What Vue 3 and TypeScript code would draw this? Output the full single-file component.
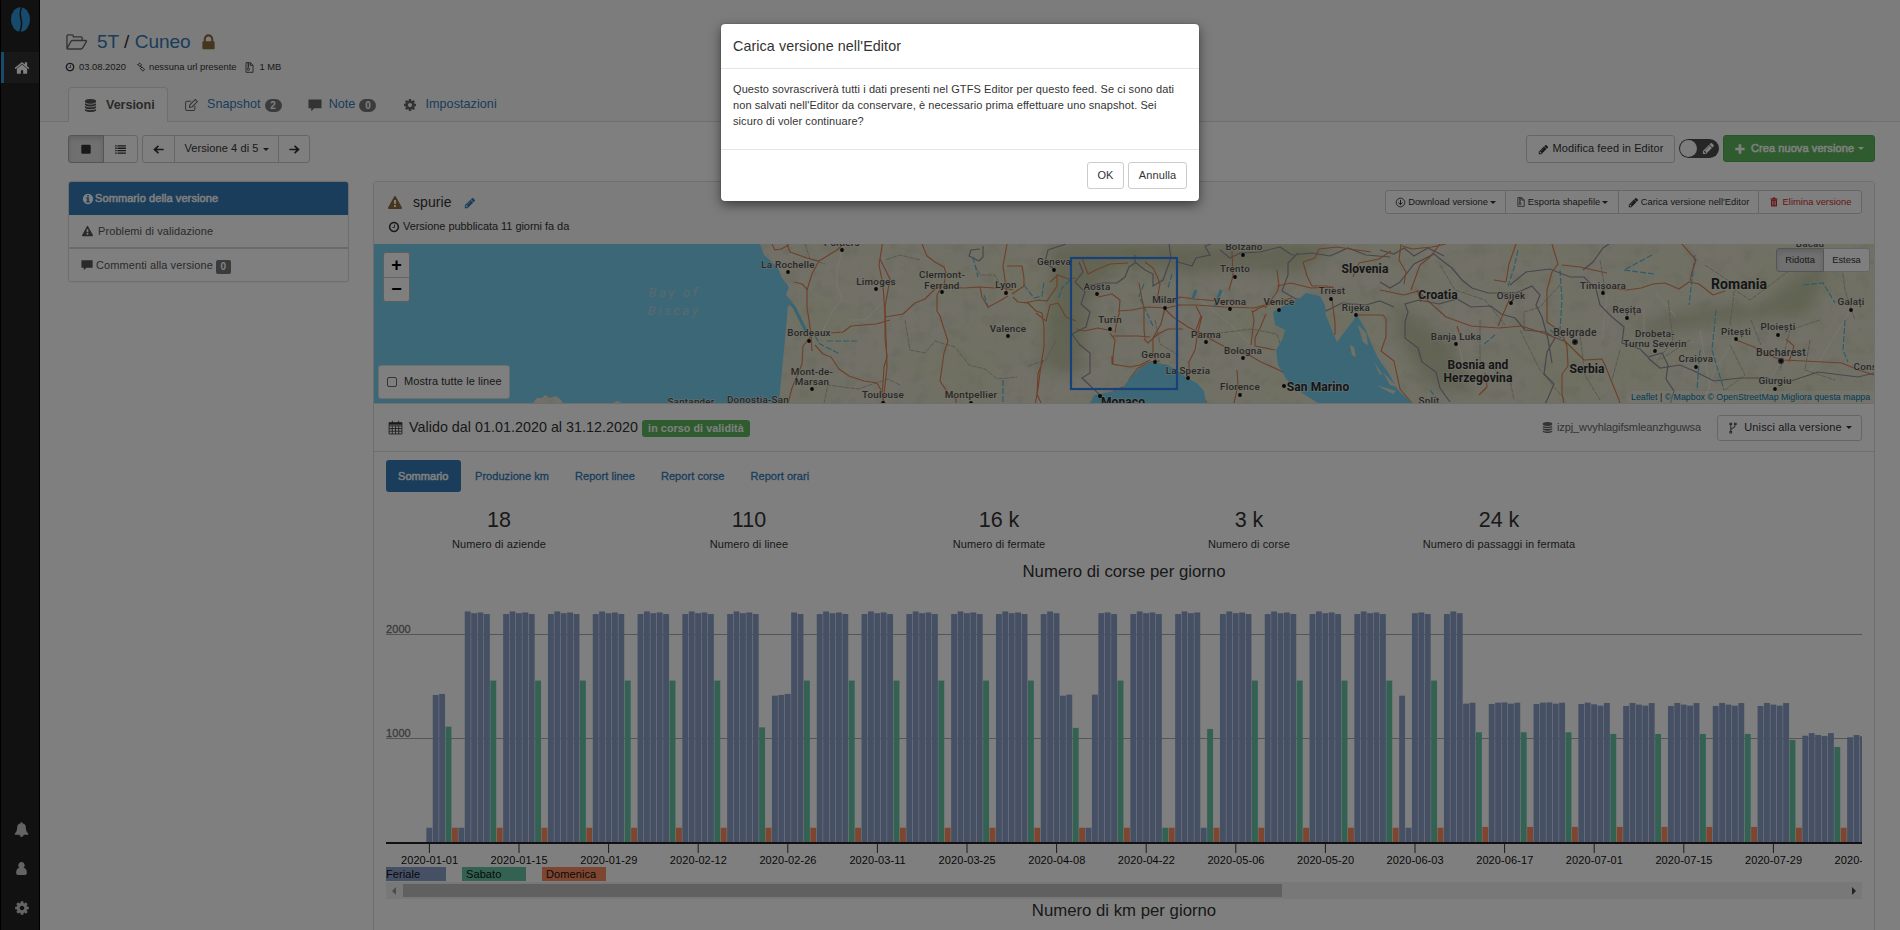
<script setup lang="ts">
import { h } from 'vue'

const icons: Record<string, string> = {
  home: 'M1472 992v480q0 26-19 45t-45 19h-384v-384h-256v384h-384q-26 0-45-19t-19-45v-480q0-1 .5-3t.5-3l575-474 575 474q1 2 1 6zm223-69l-62 74q-8 9-21 11h-3q-13 0-21-7l-692-577-692 577q-12 8-24 7-13-2-21-11l-62-74q-8-10-7-23.5t11-21.5l719-599q32-26 76-26t76 26l244 204v-195q0-14 9-23t23-9h192q14 0 23 9t9 23v408l219 182q10 8 11 21.5t-7 23.5z',
  lock: 'M640 768h512v-192q0-106-75-181t-181-75-181 75-75 181v192zm832 96v576q0 40-28 68t-68 28h-960q-40 0-68-28t-28-68v-576q0-40 28-68t68-28h32v-192q0-184 132-316t316-132 316 132 132 316v192h32q40 0 68 28t28 68z',
  clock: 'M1024 544v448q0 14-9 23t-23 9h-320q-14 0-23-9t-9-23v-64q0-14 9-23t23-9h224v-352q0-14 9-23t23-9h64q14 0 23 9t9 23zm416 352q0-148-73-273t-198-198-273-73-273 73-198 198-73 273 73 273 198 198 273 73 273-73 198-198 73-273zm224 0q0 209-103 385.5t-279.5 279.5-385.5 103-385.5-103-279.5-279.5-103-385.5 103-385.5 279.5-279.5 385.5-103 385.5 103 279.5 279.5 103 385.5z',
  database: 'M896 768q237 0 443-43t325-127v170q0 69-103 128t-280 93.5-385 34.5-385-34.5-280-93.5-103-128v-170q119 84 325 127t443 43zm0 768q237 0 443-43t325-127v170q0 69-103 128t-280 93.5-385 34.5-385-34.5-280-93.5-103-128v-170q119 84 325 127t443 43zm0-384q237 0 443-43t325-127v170q0 69-103 128t-280 93.5-385 34.5-385-34.5-280-93.5-103-128v-170q119 84 325 127t443 43zm0-1152q208 0 385 34.5t280 93.5 103 128v128q0 69-103 128t-280 93.5-385 34.5-385-34.5-280-93.5-103-128v-128q0-69 103-128t280-93.5 385-34.5z',
  warning: 'M1024 1375v-190q0-14-9.5-23.5t-22.5-9.5h-192q-13 0-22.5 9.5t-9.5 23.5v190q0 14 9.5 23.5t22.5 9.5h192q13 0 22.5-9.5t9.5-23.5zm-2-374l18-459q0-12-10-19-13-11-24-11h-220q-11 0-24 11-10 7-10 21l17 457q0 10 10 16.5t24 6.5h185q14 0 23.5-6.5t10.5-16.5zm-14-934l768 1408q35 63-2 126-17 29-46.5 46t-63.5 17h-1536q-34 0-63.5-17t-46.5-46q-37-63-2-126l768-1408q17-31 47-49t65-18 65 18 47 49z',
  pencil: 'M491 1536l91-91-235-235-91 91v107h128v128h107zm523-928q0-22-22-22-10 0-17 7l-542 542q-7 7-7 17 0 22 22 22 10 0 17-7l542-542q7-7 7-17zm-54-192l416 416-832 832h-416v-416zm683 96q0 53-37 90l-166 166-416-416 166-165q36-38 90-38 53 0 91 38l235 234q37 39 37 91z',
  cog: 'M1152 896q0-106-75-181t-181-75-181 75-75 181 75 181 181 75 181-75 75-181zm512-109v222q0 12-8 23t-20 13l-185 28q-19 54-39 91 35 50 107 138 10 12 10 25t-9 23q-27 37-99 108t-94 71q-12 0-26-9l-138-108q-44 23-91 38-16 136-29 186-7 28-36 28h-222q-14 0-24.5-8.5t-11.5-21.5l-28-184q-49-16-90-37l-141 107q-10 9-25 9-14 0-25-11-126-114-165-168-7-10-7-23 0-12 8-23 15-21 51-66.5t54-70.5q-27-50-41-99l-183-27q-13-2-21-12.5t-8-23.5v-222q0-12 8-23t19-13l186-28q14-46 39-92-40-57-107-138-10-12-10-24 0-10 9-23 26-36 98.5-107.5t94.5-71.5q13 0 26 10l138 107q44-23 91-38 16-136 29-186 7-28 36-28h222q14 0 24.5 8.5t11.5 21.5l28 184q49 16 90 37l142-107q9-9 24-9 13 0 25 10 129 119 165 170 7 8 7 22 0 12-8 23-15 21-51 66.5t-54 70.5q26 50 41 98l183 28q13 2 21 12.5t8 23.5z',
  info: 'M1152 1376v-160q0-14-9-23t-23-9h-96v-512q0-14-9-23t-23-9h-320q-14 0-23 9t-9 23v160q0 14 9 23t23 9h96v320h-96q-14 0-23 9t-9 23v160q0 14 9 23t23 9h448q14 0 23-9t9-23zm-128-896v-160q0-14-9-23t-23-9h-192q-14 0-23 9t-9 23v160q0 14 9 23t23 9h192q14 0 23-9t9-23zm640 416q0 209-103 385.5t-279.5 279.5-385.5 103-385.5-103-279.5-279.5-103-385.5 103-385.5 279.5-279.5 385.5-103 385.5 103 279.5 279.5 103 385.5z',
  bell: 'M912 1696q0-16-16-16-59 0-101.5-42.5t-42.5-101.5q0-16-16-16t-16 16q0 73 51.5 124.5t124.5 51.5q16 0 16-16zm816-288q0 52-38 90t-90 38h-448q0 106-75 181t-181 75-181-75-75-181h-448q-52 0-90-38t-38-90q50-42 91-88t85-119.5 74.5-158.5 50-206 19.5-260q0-152 117-282.5t307-158.5q-8-19-8-39 0-40 28-68t68-28 68 28 28 68q0 20-8 39 190 28 307 158.5t117 282.5q0 139 19.5 260t50 206 74.5 158.5 85 119.5 91 88z',
  user: 'M896 128a384 384 0 0 1 250 675q330 40 390 500v120q0 190-190 241H446q-190-51-190-241v-120q60-460 390-500A384 384 0 0 1 896 128z',
  folder: 'M160 1400V420q0-100 100-100h320q100 0 100 100v60h620q100 0 100 100v190M160 1440L480 850q40-80 130-80h1060q120 0 60 110l-290 500q-50 90-150 90H230q-90 0-70-70z',
  link: 'M300 520l260-260q90-90 180 0l180 180q90 90 0 180l-130 130q-90 90-180 0l-300-300zM850 1080l130-130q90-90 180 0l300 300q90 90 0 180l-130 130q-90 90-180 0l-300-300q-90-90 0-180zM700 700l370 370',
  file: 'M330 110h720l420 420v1150H330zM1040 110v440h430M640 110v150h150v150H640v150h150v150H640v150M560 1240l80-300h160l90 300q0 120-165 120t-165-120z',
  edit: 'M1400 1000v380q0 220-220 220H420q-220 0-220-220V640q0-220 220-220h500M700 1200l60-330 680-680 270 270-680 680z',
  comment: 'M60 200h1670v1100H800L420 1680v-380H60z',
  square: 'M384 256h1024q192 0 192 192v960q0 192-192 192H384q-192 0-192-192V448q0-192 192-192z',
  list: 'M20 200h250v210H20zM390 200h1390v210H390zM20 590h250v210H20zM390 590h1390v210H390zM20 980h250v210H20zM390 980h1390v210H390zM20 1370h250v210H20zM390 1370h1390v210H390z',
  left: 'M40 896l760-700 180 180-360 380h1110v280H620l360 380-180 180z',
  right: 'M1752 896l-760-700-180 180 360 380H62v280h1110l-360 380 180 180z',
  plus: 'M690 200h400v500h500v400h-500v500H690v-500H190V700h500z',
  download: 'M896 200a696 696 0 1 0 1 0zM896 480v750M560 900l336 350 336-350',
  trash: 'M256 256h350l80-150h420l80 150h350v170H256zM350 500h1090v1060q0 130-120 130H470q-120 0-120-130zM590 680v820h100V680zM850 680v820h100V680zM1110 680v820h100V680z',
  branch: 'M560 300v1200M1240 350q0 400-340 560-340 120-340 380M430 180h260v200H430zM430 1430h260v200H430zM1110 180h260v200h-260z',
  calendar: 'M130 320h1530v1350H130zM130 700h1530M130 1020h1530M130 1340h1530M510 700v970M900 700v970M1280 700v970M520 90v400M1270 90v400',
}
const outlined = ['folder', 'link', 'file', 'edit', 'download', 'branch', 'calendar']
const strokes: Record<string, number> = { folder: 110, link: 170, branch: 150, download: 160, calendar: 100 }

const Icon = (p: { n: string; s?: number }) =>
  h(
    'svg',
    {
      class: 'icon',
      viewBox: '0 0 1792 1792',
      width: p.s ?? 12,
      height: p.s ?? 12,
    },
    [
      h('path', {
        d: icons[p.n],
        'fill-rule': p.n === 'trash' ? 'evenodd' : 'nonzero',
        fill: outlined.includes(p.n) ? 'none' : 'currentColor',
        stroke: outlined.includes(p.n) ? 'currentColor' : 'none',
        'stroke-width': strokes[p.n] ?? 130,
      }),
      p.n === 'calendar' ? h('path', { d: 'M130 320h1530v240H130z', fill: 'currentColor' }) : null,
    ],
  )
Icon.props = ['n', 's']

const stats = [
  ['18', 'Numero di aziende'],
  ['110', 'Numero di linee'],
  ['16 k', 'Numero di fermate'],
  ['3 k', 'Numero di corse'],
  ['24 k', 'Numero di passaggi in fermata'],
]

/* Daily trips, one array per week starting on Monday; the first bar is Wednesday 2020-01-01. */
const full = [2195, 2220, 2203, 2210, 2195, 1555, 140]
const june = [1330, 1343, 1345, 1333, 1342, 1058, 148]
const july = [1311, 1340, 1324, 1314, 1339, 1042, 148]
const weeks: number[][] = [
  [0, 0, 140, 1417, 1427, 1112, 140],
  [140, 2220, 2203, 2210, 2195, 1555, 140],
  full, full, full, full, full,
  [2195, 2220, 2203, 2210, 2195, 1105, 140],
  [1410, 1417, 1427, 2210, 2195, 1555, 140],
  full, full, full, full, full,
  [2195, 2220, 2203, 1410, 1420, 1100, 140],
  [140, 1420, 2203, 2210, 2195, 1555, 140],
  [2195, 2220, 2203, 2210, 2195, 140, 140],
  [2195, 2220, 2203, 2210, 140, 1090, 140],
  full, full, full, full,
  [1410, 140, 2203, 2210, 2195, 1555, 140],
  [2195, 2220, 2203, 1333, 1342, 1058, 148],
  june, june,
  [1330, 1343, 1327, 1314, 1340, 1042, 148],
  july, july, july,
  [1311, 1340, 1324, 1314, 1339, 984, 140],
  [1025, 1050, 1032, 1023, 1050, 917, 140],
  [1010, 1032, 1020],
]
const bars = weeks.flatMap((w, wi) =>
  w.map((v, di) => ({
    x: 40.35 + (wi * 7 + di - 2) * 6.4,
    hgt: v * 0.104,
    color: di === 5 ? '#66c2a5' : di === 6 ? '#fc8d62' : '#8da0cb',
  })),
).filter((b) => b.hgt > 0)
const dates = [
  '2020-01-01', '2020-01-15', '2020-01-29', '2020-02-12', '2020-02-26', '2020-03-11', '2020-03-25', '2020-04-08',
  '2020-04-22', '2020-05-06', '2020-05-20', '2020-06-03', '2020-06-17', '2020-07-01', '2020-07-15', '2020-07-29', '2020-08-12',
]

const roads = [
  'M772 244l3 6 6-1 8-4M787 244l3 8 17 6 12 3 18-11 7-6M819 261l-7 13-5 16 0 18 2 12 2 15 1 16M794 282l8 2 6 6M811 336l-8 10-1 18-10 24-4 15M815 345l8 9 8 3 8 12 10 7 15 5 13 2 8 14M831 333l12-1 8-6 25-2 14-4M885 403l-3-6 2-30 3-10-2-20 0-22-2-30-4-20 5-31',
  'M880 259l10 20-5 28 2 60-4 36M885 317l18-3 12-11 10-4 10-10 7-4M942 286l-5 9 0 16 3 5 4 13 4 12-4 12-4 28 8 12 8 6 0 14M922 244l5 12 8 6 9 5 2 6-2 12M944 287l20 1 15-1 16 1 10 0 8 2M1007 244l-4 22 4 28M1007 266l15 0 2 12 0 8-12 8M1013 297l5 5 10 1 8 8 6 2 2 14 0 20-3 18-3 24-3 16 0 0M1024 303l15-3 8 1 10-15 0-12M1036 313l10 8 4-16 8-2 8 14 10 4M1043 360l-5 14-1 20 4 9M980 287l2 10 6 10 10-5 10-6M1050 282l8-7 10 4 8-1',
  'M1082 258l6 16 10-5 12-5 18-1M1098 297l14-3 8 6-1 14-2 7-2 12M1076 329l8 2 14-3 15 3M1110 333l5 7-2 16 0 8 3 1M1118 311l14-1 15-3 20 1 8-2 6-1M1139 283l2 11 3 15 0 20 1 11 3 3 10-9 10-5 15 0M1165 308l-4 16-8 14 0 15 3 8M1165 309l8 8 15 10 10 5 4-16M1113 336l25 0 12 1M1112 356l0 8 18 3 10-2 10-5M1090 403l20-10 8-4 8-3 4-8 8-10 12-6 10-1M1145 262l8 6 4 8 3 8-3 16M1170 303l10-6 14 2 24 2 14-1 8 1M1176 305l20 0 28 2 30 1 18-5 20-5M1196 306l5 10-5 14',
  'M1198 331l16 10 15 8 20 6 12 7 18 8 16 10 20 12M1198 332l-3 18 -6 12 0 16 4 10 13 13 2 12M1229 290l4-14-1-25M1252 310l2 10-3 25M1253 312l6-4 12-4M1266 314l-6 14-5 10 0 8 20 4M1237 370l1 15-4 18M1277 270l2 16 -2 6-12 16M1277 286l14-3 20 5 22-1M1303 262l4 14 5 10 14 0 8 2M1303 262l12-4 4-9 18-2 20 3 14 2M1353 277l6-14 20-4 12-8M1332 299l3 24 0 12M1358 315l25 0 3 4 0 18-5 14 13 10 6 28 12 14',
  'M1380 290l24 5 14-4 8 8 20 18 25 9 28 2 22-2 25 8 20 8 10 10 8 8 18-1 3 6 6 15 8 20 2 10M1401 244l-2 16 7 12-2 12M1402 246l10 3 20-2 14-3M1417 290l4 12M1440 244l-10 13-10 8-9 25M1516 244l-7 20-3 18-12-2M1552 244l6 20-6 8-5 18 0 32 14 10 6 14 1 20-6 8 0 20 4 18M1562 265l18 2 18 4 9 2M1607 288l20 2 14-2 12-4 12-1 14 6 10-7 10 2 14 11 12-4M1510 298l-12 28M1457 326l4 12M1485 373l2 14-8 8M1682 244l14 16-4 12-2 9M1736 340l18 7 14 8 14 5 22 1 38 2 14 6 18 6M1786 339l8 7-5 16',
]
const borders = [
  'M980 249l-9 1-2 6 10 5 4-4 0-11M1055 270l-10-8 3-12 18-6M1079 262l4 10 -8 10 10 10-4 12 9 8-4 15-14 7 8 11 10 8 0 20-8 5 18 17 20 2 11-3-3 14M1086 286l17-3 14 0 8-6 4-10 6-4 0-8M1135 262l10 8 8 4 0 12 10-6 8-22-2-14M1178 262l14 4 4-8 14-3-5-9 6-2M1298 253l-10 10 0 12-6 16 14 8 20 0 10 12 16-8 24 2 14-4 14 6M1220 250l10 8 10-5 20-1 20-5 12 8 20-2 18 3 18-8 18 7 24 2',
  'M1380 282l10 6 10-6 14-18 20-10 10 8 8 6 10 12 10 8 16 5 28 0 16-7 8 9-4 10 6 12 6 22 4 24M1510 285l16-13 24-3 20 8 14 0 12 12 4 16 12 12 12 10-2 16 18 6 8 8 14-4 6 12-2 14 8 12-4 14M1405 322l3-10-3-8 14-4 20 4 18-5 14 8 20-1 10 8 14 4 10 12 20 2 10 6-8 14-3 22 10 10-6 14-4 8M1405 322l0 16 13 10 4 14 14 10 4 16 10 14M1380 250l14 4 10-6 10 8 14-8 16 8M1583 270l10-8 10-14 6-4M1648 358l12 10 20-3 14 6 20 10 26-3 26 0 22 4 30-10 40 5 16-4',
]
const cities: [string, number, number, number, number][] = [
  ['La Rochelle', 788, 268, 788, 272], ['Limoges', 876, 285, 876, 289], ['Bordeaux', 809, 336, 809, 341], ['Toulouse', 883, 398, 883, 403],
  ['Lyon', 1006, 288, 1006, 293], ['Geneva', 1054, 265, 1054, 270], ['Valence', 1008, 332, 1008, 336], ['Montpellier', 971, 398, 971, 403],
  ['Aosta', 1097, 290, 1097, 294], ['Milan', 1165, 303, 1165, 308], ['Turin', 1110, 323, 1110, 329], ['Genoa', 1156, 358, 1155, 362],
  ['La Spezia', 1188, 374, 1188, 378], ['Parma', 1206, 338, 1206, 342], ['Bologna', 1243, 354, 1243, 358], ['Florence', 1240, 390, 1240, 395],
  ['Verona', 1230, 305, 1230, 309], ['Venice', 1279, 305, 1279, 310], ['Trento', 1235, 272, 1235, 277], ['Bolzano', 1244, 250, 1243, 255],
  ['Triest', 1332, 294, 1331, 299], ['Rijeka', 1356, 311, 1356, 315], ['Osijek', 1511, 299, 1511, 303], ['Banja Luka', 1456, 340, 1456, 344],
  ['Timișoara', 1603, 289, 1603, 293], ['Reșița', 1627, 313, 1627, 318], ['Craiova', 1696, 362, 1696, 367], ['Pitești', 1736, 335, 1736, 339],
  ['Ploiești', 1778, 330, 1778, 335], ['Giurgiu', 1775, 384, 1775, 389], ['Galați', 1851, 305, 1851, 310], ['Poitiers', 842, 246, 842, 250],
]
</script>

<template>
  <div class="page">
    <aside class="sidebar">
      <svg class="logo" width="19" height="25" viewBox="0 0 19 25">
        <ellipse cx="9.5" cy="12.5" rx="9.5" ry="12.2" fill="#2f96d8" />
        <path d="M10.5 0Q8.3 6 10 12T8.7 25" fill="none" stroke="#222" stroke-width="1.5" />
      </svg>
      <div class="side-item on"><Icon n="home" :s="16" /></div>
      <div class="side-bottom">
        <Icon n="bell" :s="15" />
        <Icon n="user" :s="15" />
        <Icon n="cog" :s="16" />
      </div>
    </aside>

    <main>
      <header>
        <h3 class="title">
          <Icon n="folder" :s="22" /><span><a>5T</a> / <a>Cuneo</a></span><Icon n="lock" :s="19" />
        </h3>
        <div class="meta">
          <Icon n="clock" :s="10" /><span class="m1">03.08.2020</span>
          <Icon n="link" :s="10" /><span class="m2">nessuna url presente</span>
          <Icon n="file" :s="11" /><span>1 MB</span>
        </div>
        <nav class="tabs">
          <div class="tab active"><Icon n="database" :s="13" /><b>Versioni</b></div>
          <div class="tab t2"><Icon n="edit" :s="14" /><a>Snapshot</a><i>2</i></div>
          <div class="tab t3"><Icon n="comment" :s="14" /><a>Note</a><i>0</i></div>
          <div class="tab t4"><Icon n="cog" :s="14" /><a>Impostazioni</a></div>
        </nav>
      </header>

      <div class="toolbar">
        <div class="group g1">
          <button class="pressed"><Icon n="square" :s="12" /></button>
          <button><Icon n="list" :s="11" /></button>
        </div>
        <div class="group g2">
          <button><Icon n="left" :s="11" /></button>
          <button>Versione 4 di 5<u /></button>
          <button><Icon n="right" :s="11" /></button>
        </div>
        <span class="grow" />
        <button class="btn modify"><Icon n="pencil" :s="11" />Modifica feed in Editor</button>
        <div class="toggle"><span /><Icon n="pencil" :s="13" /></div>
        <button class="btn create"><Icon n="plus" :s="12" />Crea nuova versione<u /></button>
      </div>

      <div class="columns">
        <section class="list">
          <div class="row sel"><Icon n="info" :s="12" />Sommario della versione</div>
          <div class="row r2"><Icon n="warning" :s="11" />Problemi di validazione</div>
          <div class="row r3"><Icon n="comment" :s="12" />Commenti alla versione<i>0</i></div>
        </section>

        <section class="panel">
          <div class="panel-head">
            <div>
              <h4><Icon n="warning" :s="14" /><span>spurie</span><Icon n="pencil" :s="12" /></h4>
              <p><Icon n="clock" :s="12" />Versione pubblicata 11 giorni fa da</p>
            </div>
            <div class="group small">
              <button class="b1"><Icon n="download" :s="11" />Download versione<u /></button>
              <button class="b2"><Icon n="file" :s="10" />Esporta shapefile<u /></button>
              <button class="b3"><Icon n="pencil" :s="11" />Carica versione nell'Editor</button>
              <button class="b4"><Icon n="trash" :s="10" />Elimina versione</button>
            </div>
          </div>

          <div class="map">
            <svg width="1500" height="159" viewBox="374 244 1500 159">
              <defs>
                <filter id="relief" x="0" y="0" width="100%" height="100%">
                  <feTurbulence type="fractalNoise" baseFrequency=".012 .02" numOctaves="5" seed="7" />
                  <feColorMatrix values="0 0 0 0 .72  0 0 0 0 .76  0 0 0 0 .52  0 3.2 0 0 -1.25" />
                </filter>
                <filter id="shade" x="0" y="0" width="100%" height="100%">
                  <feTurbulence type="fractalNoise" baseFrequency=".07" numOctaves="3" seed="3" />
                  <feColorMatrix values="0 0 0 0 .5  0 0 0 0 .5  0 0 0 0 .38  0 4 0 0 -2.1" />
                </filter>
                <filter id="soft"><feGaussianBlur stdDeviation="7" /></filter>
                <clipPath id="land">
                  <path d="M760 244l4 11 8 7 6 6 4 10 7 9-3 8 7 8-5 3-3 34-3 30-3 33h311l4-8 16-3 12-3 8-11 10-10 10-6 8 1 10 2 10 6 10 7 10 6 6 7 2 12h112l-13-8-15-10-12-20-2-15 6-10 3-10-10-5-2-13 12-7 15-7 6-5 14 3 5 9 1 10 6 15 5 12 5-7 10-13 5-7 9 15 6 15 6 13 10 14 10 18 14 13h462V244z" />
                  <path d="M533 403l4-5 5 0 3-3 5 3 6-2 4 3 3 4zM613 403l4-2 5 2z" />
                  <path d="M1358 325l8 8 2 12-5-3zM1350 345l4 2 2 10-4-2zM1374 362l8 12-2 1zM1383 372l14 15-7-2zM1376 385l20 6-3 3z" />
                </clipPath>
              </defs>
              <rect x="374" y="244" width="1500" height="159" fill="#76ceee" />
              <path d="M420.500 244v159" stroke="#7dd0ef" />
              <g clip-path="url(#land)">
                <rect x="374" y="244" width="1500" height="159" fill="#e4e1cf" />
                <rect x="374" y="244" width="1500" height="159" filter="url(#relief)" opacity=".6" />
                <g opacity=".3" filter="url(#soft)">
                  <path d="M1050 244h290l-40 30-60-5-50 5-70-10-30 30-10 80-40-5 10-60z" fill="#85925c" />
                  <path d="M1630 325l80-20 50 0 50-40 20 0-20 50-60 5-100 15z" fill="#85925c" />
                  <path d="M1390 300l60 40 20 50-40 0-30-50z" fill="#85925c" />
                </g>
                <rect x="374" y="244" width="1500" height="159" filter="url(#shade)" opacity=".22" />
                <g fill="none" stroke="#f0eee4" stroke-width="1">
                  <path d="M842 250l-5 20 0 15 5 15-10 12-10 20M885 300l-20 20-15 0M1200 300l30 24 20 20M1455 330l10 40M1607 294l-5 45M1644 310l0 40M1700 330l10 60M1780 362l-20 35M1676 317l-20-24M1735 339l-20 30-10 30M1850 310l-30 50-20 20" />
                </g>
                <g fill="none" stroke="#b1b1a1" stroke-width="1" stroke-dasharray="5 1">
                  <path d="M805 244l5 15 15 5M900 385l-12-6-30 10-30-4-4 18M905 320l5 30 15 3 10-12 20 6 14 18 16 4 12 10 20-2M920 260l-20-5-15 5M975 265l5 10 15 0 5 10M1028 366l18-6 10-20M1155 320l5 24 20 12M1212 334l40-5 25 5 4 12M1440 265l15 25 30 10 20 25M1560 285l-20 22-16 5 0 20M1580 335l5 40 15 25M1620 350l-8 30M1668 300l5 40-15 20M1705 265l30 20-5 40M1730 345l15 30-20 15M1600 260l5 30M1790 270l-40 30-15-10M1820 320l-30 10-10 40" />
                  <path d="M1480 320l0 40 30 20 4 20M1520 330l20 40 25 30M1690 340l-30 20M1751 320l10 25M1810 340l-5 30 30 10M1840 250l5 40 10 30" />
                </g>
                <g fill="none" stroke="#5bb9dd" stroke-width="1.2" stroke-dasharray="6 2">
                  <path d="M973 257l5 20M984 295l5 15M1024 285l10 13 8-2 2-14M1070 280l-8 8-4 12M1003 380l0 23M815 336l5 8 20 10M827 341h32M1144 284l-5 12 14 30M1172 274l-4 14M1518 250l-4 18-6 18M1560 270l2 30-2 30M1652 255l-28 15 30 4M1716 310l-4 40 12 40M1845 320l-2 30 5 12M1803 285l20-2 12 20M1550 330l14 10M1700 350l-3 40M1430 390l8 10M1495 335l-12 10M1695 255l-6 50" />
                </g>
                <path d="M788 301l6 6 7 14 5 10M1221 290l-5 14-1 2M1196 290l-3 8" fill="none" stroke="#6cc8ea" stroke-width="3" />
                <path v-for="(d, i) in borders" :key="'b' + i" :d="d" fill="none" stroke="#908d9a" stroke-width="1.200" />
                <path v-for="(d, i) in roads" :key="'r' + i" :d="d" fill="none" stroke="#dd8055" stroke-width="1.150" stroke-linejoin="round" />
              </g>
              <g class="places">
                <g v-for="c in cities" :key="c[0]">
                  <text :x="c[1]" :y="c[2]">{{ c[0] }}</text>
                  <circle :cx="c[3]" :cy="c[4]" r="1.900" />
                </g>
                <text x="942" y="278">Clermont-</text><text x="942" y="289">Ferrand</text><circle cx="942" cy="292" r="1.900" />
                <text x="812" y="375">Mont-de-</text><text x="812" y="385">Marsan</text><circle cx="812" cy="389" r="1.900" />
                <text x="1655" y="337">Drobeta-</text><text x="1655" y="347">Turnu Severin</text><circle cx="1655" cy="351" r="1.900" />
                <text x="691" y="405">Santander</text><text x="758" y="403">Donostia-San</text>
                <text x="1429" y="404">Split</text><text x="1867" y="370">Const</text><text x="1810" y="247">Bacău</text>
                <text x="1575" y="336" class="cap">Belgrade</text><text x="1781" y="356" class="cap">Bucharest</text>
                <g class="ring"><circle cx="1575" cy="342" r="2.400" /><circle cx="1781" cy="361" r="2.400" /></g>
                <g class="country">
                  <text x="1365" y="273">Slovenia</text><text x="1438" y="299">Croatia</text>
                  <text x="1478" y="369">Bosnia and</text><text x="1478" y="382">Herzegovina</text>
                  <text x="1587" y="373">Serbia</text><text x="1739" y="289" class="big">Romania</text>
                  <text x="1318" y="391">San Marino</text><text x="1123" y="406">Monaco</text>
                </g>
                <circle cx="1284" cy="386" r="2" /><circle cx="1100" cy="396" r="2" />
              </g>
              <g class="sea"><text x="674" y="297">Bay of</text><text x="674" y="315">Biscay</text></g>
              <rect x="1071" y="258" width="106" height="131" fill="none" stroke="#3182f5" stroke-width="2.200" />
            </svg>
            <div class="zoom"><span>+</span><span>−</span></div>
            <label class="lines"><span />Mostra tutte le linee</label>
            <div class="group size"><button class="pressed">Ridotta</button><button>Estesa</button></div>
            <div class="credits"><a>Leaflet</a> | <a>© Mapbox</a> <a>© OpenStreetMap</a> <a>Migliora questa mappa</a></div>
          </div>

          <div class="validity">
            <Icon n="calendar" :s="15" />
            <h4>Valido dal 01.01.2020 al 31.12.2020</h4>
            <b>in corso di validità</b>
            <span class="grow" />
            <span class="feed"><Icon n="database" :s="11" />izpj_wvyhlagifsmleanzhguwsa</span>
            <button class="btn merge"><Icon n="branch" :s="12" />Unisci alla versione<u /></button>
          </div>

          <nav class="pills">
            <a class="on">Sommario</a><a>Produzione km</a><a>Report linee</a><a>Report corse</a><a>Report orari</a>
          </nav>

          <div class="stats">
            <div v-for="s in stats" :key="s[1]"><strong>{{ s[0] }}</strong><span>{{ s[1] }}</span></div>
          </div>

          <h3 class="chart-title">Numero di corse per giorno</h3>
          <svg class="chart" width="1476" height="302" viewBox="0 580 1476 302">
            <g stroke="#aaa"><path d="M0 634.500H1476M0 738.500H1476" /></g>
            <text x="0" y="633" class="tick">2000</text><text x="0" y="737" class="tick">1000</text>
            <rect v-for="b in bars" :key="b.x" :x="b.x" :y="842.3 - b.hgt" width="5.900" :height="b.hgt" :fill="b.color" />
            <path d="M0 843H1476" stroke="#222" stroke-width="2" />
            <g v-for="(d, i) in dates" :key="d">
              <path :d="`M${43.4 + i * 89.6} 844v9`" stroke="#333" />
              <text :x="43.6 + i * 89.6" y="864" text-anchor="middle">{{ d }}</text>
            </g>
            <rect x="0" y="867" width="60" height="14" fill="#8da0cb" />
            <rect x="76" y="867" width="64" height="14" fill="#66c2a5" />
            <rect x="156" y="867" width="64" height="14" fill="#fc8d62" />
            <text x="0" y="877.500">Feriale</text><text x="80" y="877.500">Sabato</text><text x="160" y="877.500">Domenica</text>
          </svg>
          <div class="scrollbar"><em class="prev" /><span /><em class="next" /></div>
          <h3 class="chart-title km">Numero di km per giorno</h3>
        </section>
      </div>
    </main>

    <div class="backdrop">
      <div class="modal">
        <h4>Carica versione nell'Editor</h4>
        <p>Questo sovrascriverà tutti i dati presenti nel GTFS Editor per questo feed. Se ci sono dati<br />non salvati nell'Editor da conservare, è necessario prima effettuare uno snapshot. Sei<br />sicuro di voler continuare?</p>
        <footer><button class="btn ok">OK</button><button class="btn no">Annulla</button></footer>
      </div>
    </div>
  </div>
</template>

<style>
html, body { margin: 0; overflow: hidden; }
</style>

<style scoped>
* { box-sizing: border-box; }
.page { position: relative; display: flex; width: 1900px; height: 930px; overflow: hidden; background: #fff; color: #333; font: 11px/15.7px "Liberation Sans", Arial, sans-serif; letter-spacing: .09px; }
a { color: #337ab7; }
h3, h4, p { margin: 0; font-weight: 400; }
button { font: inherit; letter-spacing: inherit; color: inherit; background: #fff; border: 1px solid #ccc; padding: 0; display: flex; align-items: center; justify-content: center; white-space: nowrap; }
.icon { flex: none; display: block; overflow: visible; }
.grow { flex: 1; }
u { width: 0; height: 0; border: 3px solid transparent; border-top: 3px solid currentColor; border-bottom: 0; margin-left: 4px; }
i { font-style: normal; font-weight: 700; color: #fff; background: #777; text-align: center; }

.sidebar { width: 40px; flex: none; display: flex; flex-direction: column; background: #222; border-left: 1px solid #000; border-right: 1px solid #000; color: #c8c8c8; }
.logo { margin: 7px 0 20px 10px; }
.side-item { height: 31px; display: flex; align-items: center; padding-left: 10px; background: #303030; border-left: 3px solid #2f96d8; color: #fff; }
.side-bottom { margin-top: auto; height: 108px; padding-left: 13px; display: flex; flex-direction: column; gap: 24px; }

main { flex: 1; min-width: 0; }
header { height: 122px; padding: 31px 26px 0 26px; background: #f8f8f8; border-bottom: 1px solid #e2e2e2; display: flex; flex-direction: column; }
.title { display: flex; align-items: center; height: 22px; font-size: 19px; letter-spacing: 0; }
.title .icon:first-child { color: #666; margin: 0 10px 0 -1px; }
.title .icon:last-child { color: #8a6d3b; margin-left: 8px; }
.meta { display: flex; align-items: center; height: 16px; margin-top: 6px; font-size: 9.400px; letter-spacing: 0; }
.meta .icon:first-child { margin-left: -1px; }
.meta span { margin-left: 4px; }
.meta .m1 { margin-right: 10px; }
.meta .m2 { margin: 0 8px 0 3px; }
.tabs { display: flex; height: 35px; margin: 12px 0 -1px 2px; border-bottom: 1px solid #ddd; font-size: 12.600px; letter-spacing: .05px; }
.tab { display: flex; align-items: center; color: #666; padding-top: 1px; }
.tab.active { width: 100px; height: 35px; padding-left: 15px; background: #fff; border: 1px solid #ddd; border-bottom: 0; border-radius: 4px 4px 0 0; color: #555; }
.active b { margin-left: 9px; letter-spacing: -.05px; }
.t2 { margin-left: 16px; } .t3 { margin-left: 26px; } .t4 { margin-left: 27px; }
.tab a { margin-left: 9px; }
.t3 a { margin-left: 7px; }
.t4 a { margin-left: 8px; }
.tab i { margin: 2px 0 0 4px; width: 17px; height: 13px; border-radius: 7px; font-size: 10px; line-height: 13px; }

.toolbar { display: flex; height: 28px; margin: 13px 25px 0 28px; }
.group { display: flex; }
.group button + button { margin-left: -1px; }
.group button:first-child { border-radius: 3px 0 0 3px; }
.group button:last-child { border-radius: 0 3px 3px 0; }
.pressed { background: #e0e0e0; border-color: #aaa; box-shadow: inset 0 3px 5px rgba(0,0,0,.125); position: relative; z-index: 1; }
.g1 button { width: 35px; height: 28px; }
.g1 .pressed { width: 36px; }
.g2 { margin-left: 4px; }
.g2 button { width: 32px; height: 28px; }
.g2 button:first-child { width: 33px; }
.g2 button:nth-child(2) { width: 105px; }
.btn { border-radius: 3px; }
.modify { width: 149px; height: 28px; }
.modify .icon { margin-right: 4px; }
.toggle { width: 40px; height: 19px; margin: 4px 4px 0; border-radius: 10px; background: #4d4d4d; display: flex; align-items: center; color: #fff; }
.toggle span { width: 17px; height: 17px; border-radius: 50%; background: #fafafa; margin: 0 5px 0 1px; }
.create { width: 152px; height: 27px; background: #5cb85c; border-color: #4cae4c; color: #fff; -webkit-text-stroke: .5px #fff; }
.create .icon { margin-right: 5px; }

.columns { display: flex; align-items: flex-start; margin: 18px 25px 0 28px; gap: 24px; }
.list { width: 281px; flex: none; border: 1px solid #ddd; border-radius: 3px; box-shadow: 0 1px 1px rgba(0,0,0,.05); color: #555; }
.row { display: flex; align-items: center; }
.sel { height: 33px; background: #337ab7; color: #fff; padding-left: 13px; -webkit-text-stroke: .5px #fff; border-radius: 2px 2px 0 0; }
.sel .icon { margin-right: 1px; }
.r2 { height: 34px; padding: 1px 0 0 13px; border-bottom: 2px solid #d4d4d4; }
.r2 .icon { margin-right: 5px; }
.r3 { height: 32px; padding: 2px 0 0 12px; }
.r3 .icon { margin: 0 3px 3px 0; }
.r3 i { width: 15px; height: 14px; line-height: 14px; margin: 1px 0 0 3px; font-size: 10px; border-radius: 2px; }

.panel { flex: 1; min-width: 0; height: 760px; border: 1px solid #ddd; border-radius: 3px; }
.panel-head { height: 62px; display: flex; justify-content: space-between; padding: 8px 12px 0 14px; background: #f8f8f8; }
.panel-head h4 { display: flex; align-items: center; height: 24px; font-size: 14px; margin-top: 1px; }
.panel-head h4 .icon:first-child { color: #8a6d3b; }
.panel-head h4 span { margin: 0 12px 0 11px; }
.panel-head h4 .icon:last-child { color: #337ab7; }
.panel-head p { display: flex; align-items: center; gap: 3px; margin-top: 4px; letter-spacing: -.05px; }
.small { font-size: 9.400px; letter-spacing: 0; }
.small button { height: 24px; }
.small .icon { margin-right: 2px; }
.b1 { width: 121px; } .b2 { width: 114px; } .b3 { width: 141px; }
.b4 { width: 104px; color: #c9302c; }
.small .b4 .icon { margin-right: 4px; }
.small u { margin-left: 2px; }

.map { position: relative; height: 159px; }
.map > svg { display: block; }
.places text { font: 500 9.800px Roboto, sans-serif; letter-spacing: .25px; text-anchor: middle; fill: #50504c; stroke: #e9e8dc; stroke-opacity: .6; stroke-width: 1.500px; paint-order: stroke; }
.places .cap { font-size: 10.500px; }
.places .country text { font-weight: 700; font-size: 12px; letter-spacing: .1px; fill: #2c2c2c; }
.places .country .big { font-size: 14px; }
.places circle { fill: #111; }
.places .ring circle { stroke: #555; stroke-width: 1.200px; }
.sea text { font: italic 500 13.500px Roboto, sans-serif; letter-spacing: 2.400px; fill: #a8d2e2; text-anchor: middle; }
.zoom { position: absolute; left: 9px; top: 8px; width: 27px; height: 50px; border: 1px solid rgba(0,0,0,.25); border-radius: 3px; background: #fff; color: #000; font: 700 18px/24px "Liberation Sans", sans-serif; text-align: center; }
.zoom span { display: block; height: 24px; }
.zoom span + span { border-top: 1px solid #ccc; line-height: 22px; }
.lines { position: absolute; left: 4px; top: 121px; width: 132px; height: 34px; display: flex; align-items: center; background: #fff; border: 1px solid #ddd; border-radius: 3px; padding-left: 8px; letter-spacing: .08px; }
.lines span { width: 10px; height: 10px; border: 1px solid #666; border-radius: 2px; margin-right: 7px; }
.size { position: absolute; right: 4px; top: 4px; font-size: 9.400px; letter-spacing: 0; }
.size button { width: 47px; height: 24px; }
.size .pressed { width: 48px; }
.credits { position: absolute; right: 0; bottom: 0; width: 247px; height: 12px; padding-left: 4px; background: rgba(255,255,255,.25); font-size: 8.820px; line-height: 12px; white-space: nowrap; letter-spacing: 0; }
.credits a { color: #0078a8; }

.validity { display: flex; align-items: center; height: 49px; padding: 0 12px 0 14px; border-top: 1px solid #ddd; border-bottom: 1px solid #ddd; }
.validity h4 { font-size: 14.300px; letter-spacing: .03px; margin-left: 6px; }
.validity b { width: 108px; height: 17px; margin: 1px 0 0 4px; border-radius: 3px; background: #5cb85c; color: #fff; font-size: 10.700px; line-height: 16px; text-align: center; }
.feed { display: flex; align-items: center; gap: 4px; color: #666; margin-right: 16px; letter-spacing: -.1px; }
.merge { width: 145px; height: 26px; letter-spacing: .14px; }
.merge .icon { margin-right: 5px; color: #555; }

.pills { display: flex; padding: 8px 0 0 12px; gap: 2px; letter-spacing: .05px; }
.pills a { height: 32px; line-height: 32px; padding: 0 12px; border-radius: 3px; -webkit-text-stroke: .3px currentColor; }
.pills .on { background: #337ab7; color: #fff; width: 75px; -webkit-text-stroke: .5px currentColor; }
.stats { display: flex; height: 66px; padding-top: 14px; }
.stats div { width: 250px; text-align: center; display: flex; flex-direction: column; }
.stats strong { font-size: 21.500px; line-height: 28px; font-weight: 400; letter-spacing: 0; }
.stats span { line-height: 16px; margin-top: 2px; }
.chart-title { font-size: 16.750px; line-height: 20px; text-align: center; letter-spacing: 0; margin-top: 4px; height: 18px; }
.chart-title.km { margin-top: 2px; }
.chart { display: block; margin-left: 12px; }
.chart text { font: 11px "Liberation Sans", Arial, sans-serif; fill: #111; letter-spacing: .09px; }
.chart .tick { fill: #777; stroke: #777; stroke-width: .3px; }
.scrollbar { display: flex; align-items: center; justify-content: space-between; width: 1476px; height: 17px; margin-left: 12px; background: #f1f1f1; padding: 0 6px; }
.scrollbar span { width: 879px; height: 13px; background: #c1c1c1; margin: 0 auto 0 7px; }
.scrollbar em { border: 4px solid transparent; }
.scrollbar .prev { border-left: 0; border-right-color: #999; }
.scrollbar .next { border-right: 0; border-left-color: #444; }

.backdrop { position: absolute; inset: 0; background: rgba(0,0,0,.5); z-index: 5; }
.modal { width: 478px; height: 177px; margin: 24px 0 0 721px; background: #fff; border-radius: 4px; box-shadow: 0 4px 12px rgba(0,0,0,.5), 0 0 1px rgba(0,0,0,.6); }
.modal h4 { height: 45px; padding: 15px 12px 0; font-size: 14.300px; border-bottom: 1px solid #e5e5e5; }
.modal p { height: 81px; padding: 12px 12px 0; line-height: 16px; border-bottom: 1px solid #e5e5e5; white-space: nowrap; }
.modal footer { display: flex; justify-content: flex-end; gap: 4px; padding: 12px 12px 0; }
.modal .btn { height: 27px; }
.ok { width: 37px; } .no { width: 59px; }
</style>
